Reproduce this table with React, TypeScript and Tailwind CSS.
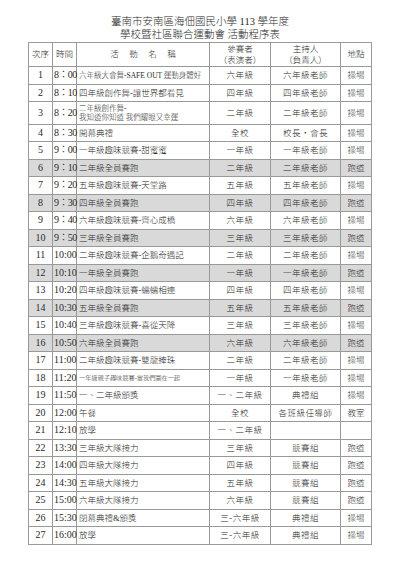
import React from "react";

type Row = {
  no: number;
  time: string;
  name: React.ReactNode;
  nameSize?: string;
  who: string;
  host: string;
  place: string;
  shaded?: boolean;
  tall?: boolean;
};

const rows: Row[] = [
  { no: 1, time: "8：00", name: "六年級大會舞-SAFE OUT 運動身體好", nameSize: "text-[7.5px]", who: "六年級", host: "六年級老師", place: "操場" },
  { no: 2, time: "8：10", name: "四年級創作舞-讓世界都看見", who: "四年級", host: "四年級老師", place: "操場" },
  {
    no: 3,
    time: "8：20",
    name: (
      <>
        二年級創作舞-
        <br />
        我知道你知道 我們耀眼又幸運
      </>
    ),
    nameSize: "text-[7.5px] leading-[9px]",
    tall: true,
    who: "二年級",
    host: "二年級老師",
    place: "操場",
  },
  { no: 4, time: "8：30", name: "開幕典禮", who: "全校", host: "校長‧會長", place: "操場" },
  { no: 5, time: "9：00", name: "一年級趣味競賽-甜蜜蜜", who: "一年級", host: "一年級老師", place: "操場" },
  { no: 6, time: "9：10", name: "二年級全員賽跑", who: "二年級", host: "二年級老師", place: "跑道", shaded: true },
  { no: 7, time: "9：20", name: "五年級趣味競賽-天堂路", who: "五年級", host: "五年級老師", place: "操場" },
  { no: 8, time: "9：30", name: "四年級全員賽跑", who: "四年級", host: "四年級老師", place: "跑道", shaded: true },
  { no: 9, time: "9：40", name: "六年級趣味競賽-齊心成橋", who: "六年級", host: "六年級老師", place: "操場" },
  { no: 10, time: "9：50", name: "三年級全員賽跑", who: "三年級", host: "三年級老師", place: "跑道", shaded: true },
  { no: 11, time: "10:00", name: "二年級趣味競賽-企鵝奇遇記", who: "二年級", host: "二年級老師", place: "操場" },
  { no: 12, time: "10:10", name: "一年級全員賽跑", who: "一年級", host: "一年級老師", place: "跑道", shaded: true },
  { no: 13, time: "10:20", name: "四年級趣味競賽-蠕蠕相連", who: "四年級", host: "四年級老師", place: "操場" },
  { no: 14, time: "10:30", name: "五年級全員賽跑", who: "五年級", host: "五年級老師", place: "跑道", shaded: true },
  { no: 15, time: "10:40", name: "三年級趣味競賽-喜從天降", who: "三年級", host: "三年級老師", place: "操場" },
  { no: 16, time: "10:50", name: "六年級全員賽跑", who: "六年級", host: "六年級老師", place: "跑道", shaded: true },
  { no: 17, time: "11:00", name: "二年級趣味競賽-雙龍捧珠", who: "二年級", host: "二年級老師", place: "操場" },
  { no: 18, time: "11:20", name: "一年級親子趣味競賽-當我們圍在一起", nameSize: "text-[6.2px]", who: "一年級", host: "一年級老師", place: "操場" },
  { no: 19, time: "11:50", name: "一、二年級頒獎", who: "一、二年級", host: "典禮組", place: "操場" },
  { no: 20, time: "12:00", name: "午餐", who: "全校", host: "各班級任導師", place: "教室" },
  { no: 21, time: "12:10", name: "放學", who: "一、二年級", host: "", place: "" },
  { no: 22, time: "13:30", name: "三年級大隊接力", who: "三年級", host: "競賽組", place: "跑道" },
  { no: 23, time: "14:00", name: "四年級大隊接力", who: "四年級", host: "競賽組", place: "跑道" },
  { no: 24, time: "14:30", name: "五年級大隊接力", who: "五年級", host: "競賽組", place: "跑道" },
  { no: 25, time: "15:00", name: "六年級大隊接力", who: "六年級", host: "競賽組", place: "跑道" },
  { no: 26, time: "15:30", name: "閉幕典禮&頒獎", who: "三-六年級", host: "典禮組", place: "操場" },
  { no: 27, time: "16:00", name: "放學", who: "三-六年級", host: "典禮組", place: "操場" },
];

const font = { fontFamily: '"Liberation Serif", "Noto Sans CJK TC", serif' };

export default function App() {
  return (
    <div className="min-h-[566px] w-[400px] bg-white pt-[15px] font-light text-[#2a2a2a]" style={font}>
      <div className="text-center text-[10.5px] leading-[13px]">
        <div>臺南市安南區海佃國民小學 113 學年度</div>
        <div>學校暨社區聯合運動會 活動程序表</div>
      </div>

      <table className="mx-auto mt-[1px] w-[343px] table-fixed border-collapse border border-[#777] text-[8.5px]">
        <colgroup>
          <col className="w-[24px]" />
          <col className="w-[24px]" />
          <col className="w-[133px]" />
          <col className="w-[61px]" />
          <col className="w-[70px]" />
          <col className="w-[31px]" />
        </colgroup>
        <thead>
          <tr className="h-[24px] leading-[11px]">
            <th className="border border-[#999] p-0 text-center font-light">次序</th>
            <th className="border border-[#999] p-0 text-center font-light">時間</th>
            <th className="border border-[#999] p-0 pl-[10.5px] text-center font-light tracking-[10.5px]">活動名稱</th>
            <th className="border border-[#999] p-0 text-center font-light">
              參賽者
              <br />
              （表演者）
            </th>
            <th className="border border-[#999] p-0 text-center font-light">
              主持人
              <br />
              （負責人）
            </th>
            <th className="border border-[#999] p-0 text-center font-light">地點</th>
          </tr>
        </thead>
        <tbody>
          {rows.map((r) => (
            <tr
              key={r.no}
              className={`${r.tall ? "h-[22.5px]" : "h-[17.5px]"} ${r.shaded ? "bg-[#d9d9d9]" : ""}`}
            >
              <td className="border border-[#999] p-0 text-center text-[10px] leading-none">{r.no}</td>
              <td
                className={`whitespace-nowrap border border-[#999] p-0 pl-[1px] text-[10px] leading-none ${
                  r.time.includes("：") ? "tracking-[-0.6px]" : ""
                }`}
              >
                {r.time}
              </td>
              <td
                className={`overflow-hidden whitespace-nowrap border border-[#999] p-0 pl-[2px] ${
                  r.nameSize ?? "leading-none"
                }`}
              >
                {r.name}
              </td>
              <td className="whitespace-nowrap border border-[#999] p-0 text-center leading-none tracking-[0.5px]">{r.who}</td>
              <td className="whitespace-nowrap border border-[#999] p-0 text-center leading-none tracking-[0.5px]">{r.host}</td>
              <td className="whitespace-nowrap border border-[#999] p-0 text-center leading-none">{r.place}</td>
            </tr>
          ))}
        </tbody>
      </table>
    </div>
  );
}
